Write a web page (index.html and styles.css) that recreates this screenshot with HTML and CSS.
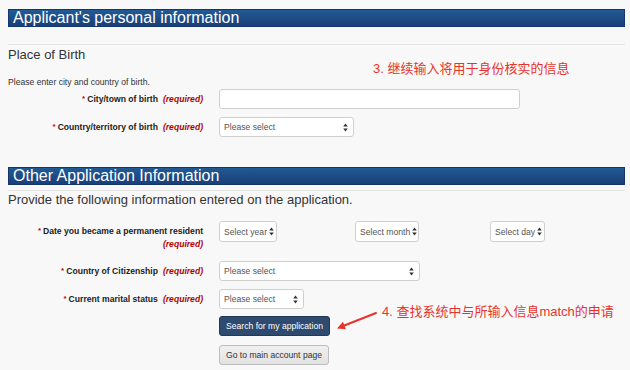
FILE: index.html
```html
<!DOCTYPE html>
<html>
<head>
<meta charset="utf-8">
<link rel="stylesheet" href="styles.css">
</head>
<body>
<div class="page">
  <h2 class="bar">Applicant's personal information</h2>
  <section class="group group-birth">
    <h3 class="group-title">Place of Birth</h3>
    <p class="hint">Please enter city and country of birth.</p>
    <div class="rows rows-birth">
      <div class="row">
        <label class="lbl"><span class="star">*</span>City/town of birth<span class="req">(required)</span></label>
        <div class="field"><div class="input w-city"></div></div>
      </div>
      <div class="row">
        <label class="lbl"><span class="star">*</span>Country/territory of birth<span class="req">(required)</span></label>
        <div class="field">
          <div class="select w-country"><span>Please select</span><svg class="arr" width="5" height="9" viewBox="0 0 5 9"><path d="M2.5 0.5 L4.8 3.6 H0.2 Z M2.5 8.5 L4.8 5.4 H0.2 Z" fill="#333"/></svg></div>
        </div>
      </div>
    </div>
  </section>

  <h2 class="bar bar-other">Other Application Information</h2>
  <section class="group group-other">
    <p class="intro">Provide the following information entered on the application.</p>
    <div class="rows rows-other">
      <div class="row row-date">
        <label class="lbl"><span class="star">*</span>Date you became a permanent resident<br><span class="req">(required)</span></label>
        <div class="field date-grid">
          <div class="select w-year"><span>Select year</span><svg class="arr" width="5" height="9" viewBox="0 0 5 9"><path d="M2.5 0.5 L4.8 3.6 H0.2 Z M2.5 8.5 L4.8 5.4 H0.2 Z" fill="#333"/></svg></div>
          <div class="select w-month"><span>Select month</span><svg class="arr" width="5" height="9" viewBox="0 0 5 9"><path d="M2.5 0.5 L4.8 3.6 H0.2 Z M2.5 8.5 L4.8 5.4 H0.2 Z" fill="#333"/></svg></div>
          <div class="select w-day"><span>Select day</span><svg class="arr" width="5" height="9" viewBox="0 0 5 9"><path d="M2.5 0.5 L4.8 3.6 H0.2 Z M2.5 8.5 L4.8 5.4 H0.2 Z" fill="#333"/></svg></div>
        </div>
      </div>
      <div class="row">
        <label class="lbl"><span class="star">*</span>Country of Citizenship<span class="req">(required)</span></label>
        <div class="field">
          <div class="select w-citizen"><span>Please select</span><svg class="arr" width="5" height="9" viewBox="0 0 5 9"><path d="M2.5 0.5 L4.8 3.6 H0.2 Z M2.5 8.5 L4.8 5.4 H0.2 Z" fill="#333"/></svg></div>
        </div>
      </div>
      <div class="row">
        <label class="lbl"><span class="star">*</span>Current marital status<span class="req">(required)</span></label>
        <div class="field">
          <div class="select w-marital"><span>Please select</span><svg class="arr" width="5" height="9" viewBox="0 0 5 9"><path d="M2.5 0.5 L4.8 3.6 H0.2 Z M2.5 8.5 L4.8 5.4 H0.2 Z" fill="#333"/></svg></div>
        </div>
      </div>
    </div>
    <div class="actions">
      <button class="btn btn-primary">Search for my application</button>
      <button class="btn btn-default">Go to main account page</button>
    </div>
  </section>
</div>

<div class="note note-3">3. 继续输入将用于身份核实的信息</div>
<div class="note note-4">4. 查找系统中与所输入信息match的申请</div>
<svg class="arrow" width="46" height="26" viewBox="0 0 46 26">
  <line x1="42" y1="5" x2="9" y2="18" stroke="#e8332b" stroke-width="2" stroke-linecap="round"/>
  <polygon points="3,20.5 11.9,21.3 8.95,13.8" fill="#e8332b"/>
</svg>
</body>
</html>
```

FILE: styles.css
```css
html, body {
  margin: 0;
  padding: 0;
}
body {
  background: #f8f8f8;
  font-family: "Liberation Sans", Arial, sans-serif;
  color: #222;
  width: 630px;
  height: 370px;
  overflow: hidden;
  position: relative;
}
.page {
  padding-left: 8px;
  width: 617px;
}
.bar {
  margin: 9px 0 0;
  box-sizing: border-box;
  height: 18px;
  line-height: 16px;
  padding-left: 4px;
  font-size: 16px;
  font-weight: normal;
  color: #fff;
  background: linear-gradient(#215a95, #1a3f78);
  border: 1px solid #14366a;
}
.bar-other {
  margin-top: 30px;
}
.group {
  border-top: 1px solid #e3e3e3;
}
.group-birth {
  margin-top: 17px;
}
.group-other {
  margin-top: 5px;
}
.group-title {
  margin: 3px 0 0;
  font-size: 13px;
  line-height: 14px;
  font-weight: normal;
  color: #333;
}
.hint {
  margin: 15px 0 0;
  font-size: 8.6px;
  line-height: 10px;
  color: #333;
}
.intro {
  margin: 2px 0 0;
  font-size: 13px;
  line-height: 14px;
  color: #333;
}
.rows {
  display: flex;
  flex-direction: column;
  gap: 8px;
}
.rows-birth {
  margin-top: 2px;
}
.rows-other {
  margin-top: 14px;
}
.row {
  display: flex;
  align-items: flex-start;
}
.row-date {
  padding-bottom: 3px;
}
.lbl {
  width: 195px;
  margin-right: 16px;
  padding-top: 4px;
  text-align: right;
  font-size: 8.6px;
  line-height: 12px;
  font-weight: bold;
  color: #222;
}
.star {
  color: #c00;
  margin-right: 2px;
  font-size: 8px;
  position: relative;
  top: -1px;
}
.req {
  color: #b00000;
  font-style: italic;
  margin-left: 5px;
}
.field {
  display: flex;
}
.date-grid {
  display: grid;
  grid-template-columns: 136px 135px auto;
  align-items: start;
}
.input, .select {
  box-sizing: border-box;
  height: 20px;
  border: 1px solid #cfcfcf;
  border-radius: 3px;
  background: #fff;
}
.select {
  display: flex;
  align-items: center;
  justify-content: space-between;
  gap: 2px;
  padding: 0 5px 0 4px;
  font-size: 8.6px;
  color: #555;
  white-space: nowrap;
}
.arr {
  flex: none;
}
.w-city { width: 301px; }
.w-country { width: 135px; }
.w-year, .w-month, .w-day {
  height: 21px;
  padding: 0 3px 0 4px;
}
.w-year { width: 58px; }
.w-month { width: 64px; }
.w-day { width: 55px; }
.w-citizen { width: 201px; }
.w-marital { width: 85px; }
.actions {
  display: flex;
  flex-direction: column;
  align-items: flex-start;
  gap: 9px;
  margin: 7px 0 0 211px;
}
.btn {
  box-sizing: border-box;
  height: 20px;
  padding: 0 2px;
  border-radius: 3px;
  font-family: "Liberation Sans", Arial, sans-serif;
  font-size: 8.6px;
  line-height: 18px;
  white-space: nowrap;
  text-align: center;
}
.btn-primary {
  width: 111px;
  background: #2e4a6e;
  border: 1px solid #223857;
  color: #fff;
}
.btn-default {
  width: 110px;
  background: linear-gradient(#f0f0f0, #e2e2e2);
  border: 1px solid #bdbdbd;
  color: #333;
}
.note {
  position: absolute;
  font-family: "Liberation Sans", "Noto Sans CJK SC", sans-serif;
  font-size: 13px;
  line-height: 16px;
  color: #e8332b;
  white-space: nowrap;
}
.note-3 {
  left: 373px;
  top: 61px;
}
.note-4 {
  left: 382px;
  top: 304px;
}
.arrow {
  position: absolute;
  left: 334px;
  top: 308px;
}
```
